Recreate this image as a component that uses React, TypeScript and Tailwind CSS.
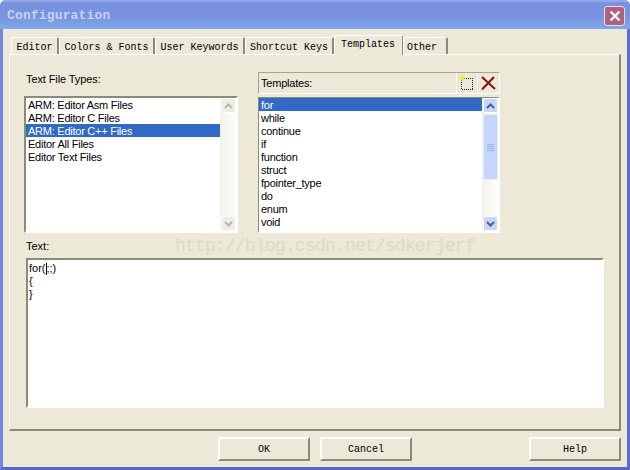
import React from "react";

const mono = { fontFamily: '"Liberation Mono", monospace' };

function Tab({ label, w, active }: { label: string; w: string; active?: boolean }) {
  return (
    <div
      className={
        active
          ? "relative z-10 -mb-px flex h-[20px] items-start rounded-t-[2px] border-x border-t border-x-white border-t-white border-r-[#8c8a78] bg-[#ece9d8] pt-[2px] text-[10px] leading-[14px] text-black " + w
          : "flex h-[17px] items-start rounded-t-[2px] border-l border-t border-r-2 border-l-white border-t-white border-r-[#8c8a78] bg-[#ece9d8] pt-[3px] text-[10px] leading-[14px] text-black " + w
      }
      style={mono}
    >
      {label}
    </div>
  );
}

function Arrow({ up, active }: { up?: boolean; active?: boolean }) {
  return (
    <div
      className={
        active
          ? "flex h-[15px] w-[15px] shrink-0 items-center justify-center rounded-[2px] border border-white bg-[#c5d5fb]"
          : "flex h-[15px] w-[15px] shrink-0 items-center justify-center rounded-[2px] border border-white bg-[#eeede5]"
      }
    >
      <svg width="9" height="6" viewBox="0 0 9 6">
        <path
          d={up ? "M1 5 L4.5 1.5 L8 5" : "M1 1 L4.5 4.5 L8 1"}
          fill="none"
          stroke={active ? "#4d6185" : "#b8b7a9"}
          strokeWidth="2"
        />
      </svg>
    </div>
  );
}

function ListBox({
  items,
  selected,
  box,
  active,
}: {
  items: string[];
  selected: number;
  box: string;
  active?: boolean;
}) {
  return (
    <div className={"flex border-r-2 border-b-2 border-t-[#8c8a78] border-l-[#8c8a78] border-r-white border-b-white bg-white " + box}>
      <div className="min-w-0 flex-1 overflow-hidden">
        {items.map((t, i) => (
          <div
            key={t}
            className={
              i === selected
                ? "h-[13px] whitespace-nowrap bg-[#316ac5] pl-[2px] text-[11px] leading-[15px] tracking-[-0.25px] text-white"
                : "h-[13px] whitespace-nowrap pl-[2px] text-[11px] leading-[15px] tracking-[-0.25px] text-black"
            }
          >
            {t}
          </div>
        ))}
      </div>
      <div className="flex w-[16px] shrink-0 flex-col bg-gradient-to-r from-[#f3f2ea] to-[#fdfdfa] pl-[1px]">
        <Arrow up active={active} />
        {active ? (
          <div className="mt-[1px] flex h-[66px] flex-col items-center justify-center gap-[1px] rounded-[2px] border border-[#e4ebfd] bg-[#c5d5fb]">
            <div className="h-px w-[7px] bg-[#9db4e8]" />
            <div className="h-px w-[7px] bg-[#9db4e8]" />
            <div className="h-px w-[7px] bg-[#9db4e8]" />
            <div className="h-px w-[7px] bg-[#9db4e8]" />
          </div>
        ) : null}
        <div className="flex-1" />
        <Arrow active={active} />
      </div>
    </div>
  );
}

function DlgButton({ label, className }: { label: string; className?: string }) {
  return (
    <div
      className={
        "flex h-[24px] w-[92px] items-center justify-center border-2 border-t-white border-l-white border-r-[#8c8a78] border-b-[#8c8a78] bg-[#ece9d8] text-[10px] text-black " +
        (className ?? "")
      }
      style={mono}
    >
      {label}
    </div>
  );
}

export default function App() {
  return (
    <div
      className="relative flex h-[470px] w-[630px] flex-col overflow-hidden rounded-t-[6px] bg-[#6f83dc]"
      style={{ fontFamily: '"Liberation Sans", Arial, sans-serif' }}
    >
      {/* Title bar */}
      <div className="flex h-[29px] shrink-0 items-center justify-between border-t-2 border-t-[#92a8ec] bg-gradient-to-b from-[#7a92e0] via-[#7892e0] to-[#7fa8ec] pl-[7px] pr-[5px]">
        <div className="pt-[1px] text-[13px] font-bold tracking-[0.15px] text-[#c6d4f4]" style={mono}>
          Configuration
        </div>
        <div className="flex h-[20px] w-[21px] items-center justify-center rounded-[3px] border border-[#e6dce6] bg-[#b0617f]">
          <svg width="12" height="12" viewBox="0 0 12 12">
            <path d="M1.5 1.5 L10.5 10.5 M10.5 1.5 L1.5 10.5" stroke="#ffffff" strokeWidth="2.4" />
          </svg>
        </div>
      </div>

      {/* Client area */}
      <div className="flex min-h-0 flex-1 flex-col border-x-[3px] border-b-[3px] border-l-[#7585e0] border-r-[#5d6dd8] border-b-[#5566cc] bg-[#ece9d8] px-[6px] pt-[7px]">
        {/* Tabs */}
        <div className="relative z-10 flex h-[18px] shrink-0 items-end pl-[2px]">
          <Tab label="Editor" w="w-[48px] justify-center" />
          <Tab label="Colors & Fonts" w="w-[96px] justify-center" />
          <Tab label="User Keywords" w="w-[90px] justify-center" />
          <Tab label="Shortcut Keys" w="w-[89px] justify-center" />
          <Tab label="Templates" w="w-[69px] justify-start pl-[6px]" active />
          <Tab label="Other" w="w-[45px] justify-start pl-[3px]" />
        </div>

        {/* Panel */}
        <div className="flex h-[377px] shrink-0 flex-col border-2 border-l border-t border-t-white border-l-white border-r-[#8c8a78] border-b-[#8c8a78] pl-[14px] pr-[13px]">
          <div className="flex h-[178px] shrink-0 pt-[17px]">
            <div className="flex w-[234px] shrink-0 flex-col">
              <div className="h-[24px] pl-[2px] text-[11px] leading-[14px] tracking-[-0.1px] text-black">Text File Types:</div>
              <ListBox
                box="h-[137px] w-[214px] border-t-2 border-l-2"
                selected={2}
                items={["ARM: Editor Asm Files", "ARM: Editor C Files", "ARM: Editor C++ Files", "Editor All Files", "Editor Text Files"]}
              />
            </div>
            <div className="flex w-[242px] shrink-0 flex-col">
              <div className="flex h-[22px] shrink-0 items-center justify-between border-t border-l border-r border-b border-t-[#a5a393] border-l-[#a5a393] border-r-white border-b-white">
                <span className="pl-[2px] pt-[1px] text-[11px] tracking-[-0.2px] text-black">Templates:</span>
                <div className="flex h-full items-stretch">
                  <div className="flex w-[22px] items-center justify-center border-l border-r border-white">
                    <svg width="16" height="16" viewBox="0 0 16 16" shapeRendering="crispEdges">
                      <rect x="2.5" y="3.5" width="11" height="11" fill="none" stroke="#222" strokeDasharray="1 1" />
                      <path d="M3 0 V7 M0 3 H6 M1 1 L5 5 M5 1 L1 5" stroke="#f2e838" strokeWidth="1" shapeRendering="auto" />
                    </svg>
                  </div>
                  <div className="flex w-[21px] items-center justify-center">
                    <svg width="16" height="16" viewBox="0 0 16 16">
                      <path d="M1 2 L14 14 M13 2 L1 14.5" stroke="#8b0f14" strokeWidth="2" />
                    </svg>
                  </div>
                </div>
              </div>
              <div className="h-[3px] shrink-0" />
              <ListBox
                box="h-[136px] w-[242px] border-t border-l"
                selected={0}
                active
                items={["for", "while", "continue", "if", "function", "struct", "fpointer_type", "do", "enum", "void", "#if"]}
              />
            </div>
          </div>

          <div className="h-[25px] shrink-0 pl-[2px] pt-[6px] text-[11px] leading-[14px] text-black">Text:</div>
          <div className="ml-[2px] h-[150px] w-[578px] shrink-0 border-2 border-t-[#8c8a78] border-l-[#8c8a78] border-r-white border-b-white bg-white pl-[1px] pt-[2px] text-[11px] leading-[13px] text-black">
            <div className="flex">
              <span>for(</span>
              <span className="mt-[1px] h-[12px] w-px bg-black" />
              <span>;;)</span>
            </div>
            <div>{"{"}</div>
            <div>{"}"}</div>
          </div>
        </div>

        {/* Buttons */}
        <div className="flex shrink-0 pt-[6px]">
          <DlgButton label="OK" className="ml-[209px]" />
          <DlgButton label="Cancel" className="ml-[10px]" />
          <DlgButton label="Help" className="ml-[117px]" />
        </div>
      </div>

      {/* Watermark */}
      <div
        className="pointer-events-none absolute left-[175px] top-[236px] text-[18px] leading-[20px] tracking-[-0.8px] text-[#dcd9c8]"
        style={mono}
      >
        http://blog.csdn.net/sdkerjerf
      </div>
    </div>
  );
}
